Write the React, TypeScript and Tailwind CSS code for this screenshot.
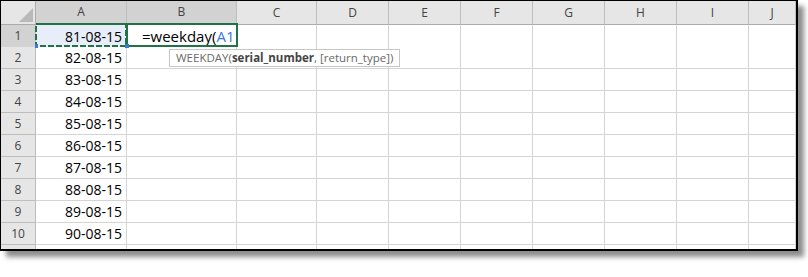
import React from 'react';

const cols = ['A', 'B', 'C', 'D', 'E', 'F', 'G', 'H', 'I', 'J'];
const values = ['81-08-15', '82-08-15', '83-08-15', '84-08-15', '85-08-15', '86-08-15', '87-08-15', '88-08-15', '89-08-15', '90-08-15', ''];

const gridCols = 'grid grid-cols-[35px_91px_110px_80px_72px_72px_72px_72px_72px_72px_1fr]';

const HeaderRow = () => (
  <div className={`${gridCols} h-[24px]`}>
    <div className="relative bg-[#e6e6e6] border-r border-b border-[#ababab]">
      <svg className="absolute right-[2px] bottom-[2px]" width="14" height="14" viewBox="0 0 14 14">
        <polygon points="14,0 14,14 0,14" fill="#b9b9b9" />
      </svg>
    </div>
    {cols.map((c, i) => (
      <div
        key={c}
        className={`flex items-center justify-center text-[12px] text-[#444] border-r border-[#bdbdbd] ${
          i < 2 ? 'bg-[#d2d2d2] border-b-2 border-b-[#217346]' : 'bg-[#e6e6e6] border-b border-b-[#ababab]'
        }`}
      >
        {c}
      </div>
    ))}
  </div>
);

const Row = ({ n, value }: { n: number; value: string }) => (
  <div className={`${gridCols} h-[22px]`}>
    <div
      className={`flex items-center justify-center text-[12px] text-[#444] border-r border-b border-[#bdbdbd] ${
        n === 1 ? 'bg-[#d2d2d2]' : 'bg-[#e6e6e6]'
      }`}
    >
      {n <= 10 ? n : ''}
    </div>
    <div
      className={`flex items-center justify-end pr-[4px] text-[14px] text-black border-r border-b border-[#d4d4d4] ${
        n === 1 ? 'bg-[#e8eef9]' : 'bg-white'
      }`}
    >
      {value}
    </div>
    <div className="flex items-center pl-[15px] text-[15px] text-black border-r border-b border-[#d4d4d4] bg-white whitespace-nowrap">
      {n === 1 && (
        <span>
          =weekday(<span className="text-[#3b78d8]">A1</span>
        </span>
      )}
    </div>
    {cols.slice(2).map((c) => (
      <div key={c} className="border-r border-b border-[#d4d4d4] bg-white" />
    ))}
  </div>
);

export default function App() {
  return (
    <div className="w-[808px] h-[277px] bg-white" style={{ fontFamily: '"Open Sans", "Noto Sans", sans-serif' }}>
      <div className="w-[798px] h-[251px] border-t border-l border-r-2 border-b-2 border-black shadow-[6px_6px_5px_rgba(0,0,0,0.45)] overflow-hidden bg-white">
        <div className="relative h-full">
          <HeaderRow />
          {values.map((v, i) => (
            <Row key={i} n={i + 1} value={v} />
          ))}

          {/* copy marquee around A1 */}
          <svg className="absolute left-[34px] top-[22px]" width="92" height="24">
            <rect x="1" y="1" width="90" height="22" fill="none" stroke="#217346" strokeWidth="2" strokeDasharray="6 2" />
          </svg>

          {/* active cell B1 */}
          <div className="absolute left-[125px] top-[22px] w-[112px] h-[24px] border-2 border-[#217346]" />

          {/* selection handles */}
          <div className="absolute left-[124px] top-[43px] w-[4px] h-[4px] bg-[#3c78d8]" />
          <div className="absolute left-[34px] top-[43px] w-[3px] h-[4px] bg-[#3c78d8]" />

          {/* function tooltip */}
          <div className="absolute left-[168px] top-[48px] h-[18px] px-[6px] flex items-center bg-white border border-[#c6c6c6] text-[11.5px] text-[#6a6a6a] whitespace-nowrap">
            WEEKDAY(<span className="font-bold text-[#444]">serial_number</span>, [return_type])
          </div>
        </div>
      </div>
    </div>
  );
}
